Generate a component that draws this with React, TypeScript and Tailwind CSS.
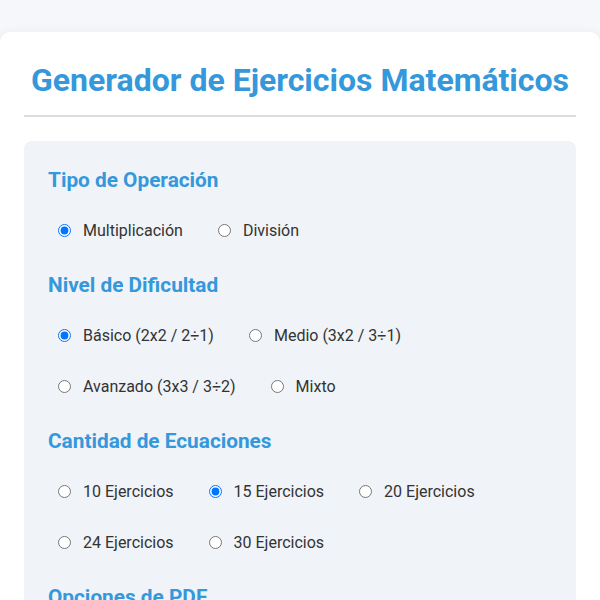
import React, { useState } from "react";

type Opt = { value: string; label: string };

function Section({
  title,
  name,
  options,
  value,
  onChange,
}: {
  title: string;
  name: string;
  options: Opt[];
  value: string;
  onChange: (v: string) => void;
}) {
  return (
    <div className="mb-[15px]">
      <h3 className="text-[20.8px] leading-[28px] font-bold text-[#3498db] mb-[11px]">{title}</h3>
      <div className="flex flex-wrap gap-x-[35px] pl-[10px]">
        {options.map((o) => (
          <label key={o.value} className="h-[51px] flex items-center gap-[12px] text-[16px] text-[#333333] cursor-pointer">
            <input
              type="radio"
              name={name}
              value={o.value}
              checked={value === o.value}
              onChange={() => onChange(o.value)}
              className="m-0 w-[13px] h-[13px]"
            />
            <span>{o.label}</span>
          </label>
        ))}
      </div>
    </div>
  );
}

export default function App() {
  const [op, setOp] = useState("mult");
  const [lvl, setLvl] = useState("basico");
  const [qty, setQty] = useState("15");
  return (
    <div className="min-h-screen bg-[#f5f7fa] pt-[32px]" style={{ fontFamily: "Roboto, 'Liberation Sans', sans-serif" }}>
      <div className="bg-white rounded-[10px] shadow-[0_0_10px_rgba(0,0,0,0.05)] px-[24px] pt-[28px] pb-[24px]">
        <h1 className="text-[32px] leading-[40px] font-bold text-[#3498db] text-center">
          Generador de Ejercicios Matemáticos
        </h1>
        <div className="mt-[15px] h-[2px] bg-[#dddddd]" />
        <div className="mt-[24px] bg-[#f0f3f8] rounded-[8px] px-[24px] pt-[25px] pb-[20px]">
          <Section
            title="Tipo de Operación"
            name="op"
            value={op}
            onChange={setOp}
            options={[
              { value: "mult", label: "Multiplicación" },
              { value: "div", label: "División" },
            ]}
          />
          <Section
            title="Nivel de Dificultad"
            name="lvl"
            value={lvl}
            onChange={setLvl}
            options={[
              { value: "basico", label: "Básico (2x2 / 2÷1)" },
              { value: "medio", label: "Medio (3x2 / 3÷1)" },
              { value: "avanzado", label: "Avanzado (3x3 / 3÷2)" },
              { value: "mixto", label: "Mixto" },
            ]}
          />
          <Section
            title="Cantidad de Ecuaciones"
            name="qty"
            value={qty}
            onChange={setQty}
            options={[
              { value: "10", label: "10 Ejercicios" },
              { value: "15", label: "15 Ejercicios" },
              { value: "20", label: "20 Ejercicios" },
              { value: "24", label: "24 Ejercicios" },
              { value: "30", label: "30 Ejercicios" },
            ]}
          />
          <h3 className="text-[20.8px] leading-[28px] font-bold text-[#3498db] mb-[11px]">Opciones de PDF</h3>
          <div className="h-[100px]" />
        </div>
      </div>
    </div>
  );
}
